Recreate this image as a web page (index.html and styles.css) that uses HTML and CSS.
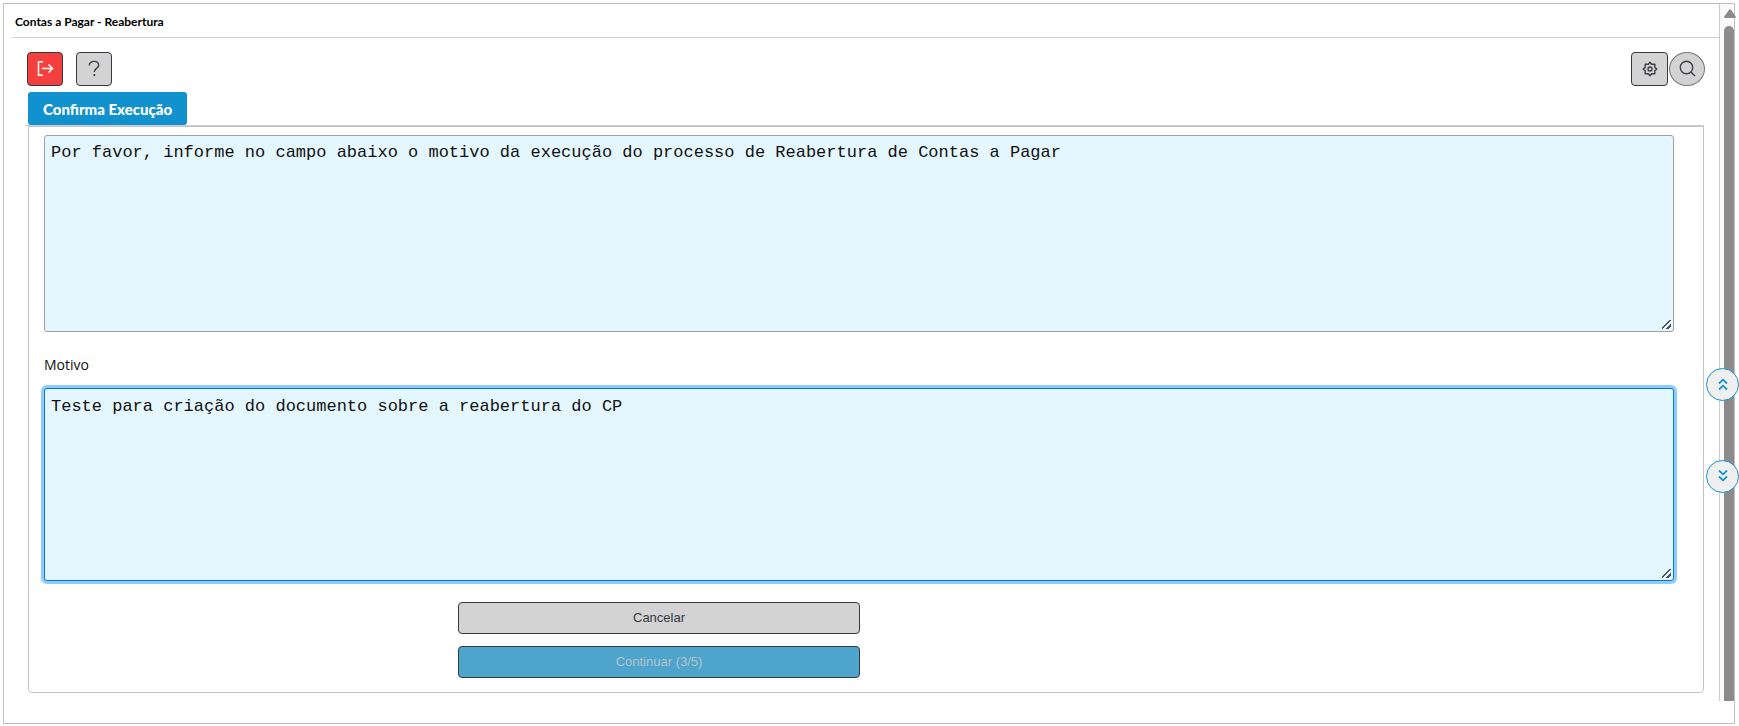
FILE: index.html
```html
<!DOCTYPE html>
<html lang="pt-BR">
<head>
<meta charset="utf-8">
<title>Contas a Pagar - Reabertura</title>
<link rel="stylesheet" href="styles.css">
</head>
<body>
<div class="frame">
  <div class="window">
    <main class="main">
      <header class="header"><h1 class="title">Contas a Pagar - Reabertura</h1></header>
      <div class="toolbar">
        <button class="tool tool-exit" type="button" aria-label="Sair">
          <svg width="18" height="18" viewBox="0 0 18 18"><path d="M7 1.800H2.500V15.300H7M6 8.500H16.500M12.500 4.500L16.500 8.500L12.500 12.500"/></svg>
        </button>
        <button class="tool" type="button" aria-label="Ajuda">
          <svg width="18" height="18" viewBox="0 0 18 18"><path d="M4.300 5.400C4.300 2.800 6.200 1.400 9 1.400S13.700 2.900 13.700 5.200C13.700 8.600 9.300 8.300 9.300 11.900"/><path class="dot" d="M8.500 14h1.700v2h-1.700z"/></svg>
        </button>
        <span class="spacer"></span>
        <button class="tool tool-gear" type="button" aria-label="Configurações">
          <svg width="16" height="16" viewBox="0 0 16 16"><circle cx="8" cy="8" r="2"/><path d="M8 1.200L9.600 3.200L12.800 3.200L12.800 6.400L14.800 8L12.800 9.600L12.800 12.800L9.600 12.800L8 14.800L6.400 12.800L3.200 12.800L3.200 9.600L1.200 8L3.200 6.400L3.200 3.200L6.400 3.200Z" stroke-linejoin="round"/></svg>
        </button>
        <button class="tool tool-search" type="button" aria-label="Pesquisar">
          <svg width="18" height="18" viewBox="0 0 18 18"><circle cx="8.500" cy="7.500" r="6.200"/><path d="M12.900 11.900L17 16"/></svg>
        </button>
      </div>
      <div class="tabs"><button class="tab" type="button">Confirma Execução</button></div>
      <form class="panel">
        <textarea class="field field-message" aria-label="Mensagem" readonly>Por favor, informe no campo abaixo o motivo da execução do processo de Reabertura de Contas a Pagar</textarea>
        <label class="label" for="motivo">Motivo</label>
        <textarea class="field field-reason" id="motivo" spellcheck="false">Teste para criação do documento sobre a reabertura do CP</textarea>
        <div class="actions">
          <button class="action" type="button">Cancelar</button>
          <button class="action action-next" type="button" disabled>Continuar (3/5)</button>
        </div>
      </form>
    </main>
    <div class="scrollbar">
      <svg class="arrow" width="12" height="10" viewBox="0 0 12 10"><path d="M5 .8Q6 -.4 7 .8L11.700 7.500Q12.300 9 10.700 9H1.300Q-.3 9 .3 7.500z"/></svg>
      <div class="thumb"></div>
    </div>
  </div>
</div>
<nav class="jump">
  <button class="round" type="button" aria-label="Subir"><svg width="12" height="14" viewBox="0 0 12 14"><path d="M2 5.500L6 1.700L10 5.500M2 11.500L6 7.700L10 11.500"/></svg></button>
  <button class="round" type="button" aria-label="Descer"><svg width="12" height="14" viewBox="0 0 12 14"><path d="M2 .5L6 4.300L10 .5M2 6.500L6 10.300L10 6.500"/></svg></button>
</nav>
</body>
</html>
```
FILE: styles.css
```css
* { box-sizing: border-box; }
body { margin: 0; padding: 3px 4px 2px 3px; background: #fff; color: #111; font-family: "Open Sans", sans-serif; }
button { font-family: inherit; padding: 0; }
.frame { border: 1px solid #c0c0c0; padding-bottom: 22px; }
.window { display: flex; }
.main { flex: 1; min-width: 0; border-right: 1px solid #ccc; padding-bottom: 8px; }
.header { height: 34px; margin-left: 8px; border-bottom: 1px solid #d0d0d0; }
.title { margin: 0; padding: 3px 0 0 3px; font: 700 12px/30px Lato, sans-serif; color: #000; }
.toolbar { display: flex; padding: 14px 14px 6px 23px; }
.tool { display: flex; align-items: center; justify-content: center; width: 36px; height: 34px; margin-right: 13px; border: 1px solid #343a40; border-radius: 4px; background: #d3d3d3; }
.tool svg { fill: none; stroke: #3c3f48; stroke-width: 1.4; }
.tool .dot { fill: #3c3f48; stroke: none; }
.tool-exit { background: #f43f3f; }
.tool-exit svg { stroke: #fff; stroke-width: 1.5; }
.spacer { flex: 1; }
.tool-gear { width: 37px; margin-right: 1px; }
.tool-search { margin-right: 0; border-color: #777; border-radius: 50%; }
.tabs { display: flex; margin: 0 15px 0 21px; padding-left: 3px; border-bottom: 1px solid #ccc; }
.tab { height: 33px; padding: 2px 15px 0; border: 0; border-radius: 3px; background: #1191cd; color: #fff; font: 900 15px/31px Lato, sans-serif; }
.panel { display: flex; flex-direction: column; margin: 0 15px 0 24px; padding: 8px 29px 14px 15px; border: 1px solid #c4c4c4; border-radius: 0 0 4px 4px; }
.field { display: block; width: 100%; margin: 0; padding: 6px; border: 1px solid #a0a0a0; border-radius: 3px; outline: 0; background: #e4f6fe; color: #111; font: 17px/21px "Liberation Mono", monospace; resize: vertical; }
.field::-webkit-resizer { background: linear-gradient(135deg, transparent 5px, #4b5157 5px, #4b5157 7px, transparent 7px, transparent 9px, #4b5157 9px, #4b5157 11px, transparent 11px) 4px 4px / 9px 9px no-repeat; }
.field-message { height: 197px; }
.field-reason { height: 193px; padding-top: 7px; border-color: #0078d7; box-shadow: 0 0 0 3px #90cbff; }
.label { margin: 22px 0 12px; font-size: 14px; line-height: 22px; }
.actions { display: flex; flex-direction: column; gap: 12px; width: 402px; margin: 21px 0 0 25.4%; }
.action { height: 32px; border: 1px solid #343a40; border-radius: 4px; background: #d3d3d3; color: #343a40; font: 13px/20px "Liberation Sans", sans-serif; }
.action-next { background: #4da5ce; color: #b8c2c8; }
.scrollbar { display: flex; flex-direction: column; width: 14px; padding: 5px 0 0 4px; background: #fafafa; }
.arrow { flex: none; margin-bottom: 7px; fill: #8b8b8b; overflow: visible; }
.thumb { flex: 1; border-radius: 5px 5px 0 0; background: #8b8b8b; }
.jump { position: absolute; top: 368px; right: 0; display: flex; flex-direction: column; gap: 59px; }
.round { display: flex; align-items: center; justify-content: center; width: 33px; height: 33px; border: 1px solid #1191cd; border-radius: 50%; background: #efefef; }
.round svg { fill: none; stroke: #1191cd; stroke-width: 1.8; }
```
